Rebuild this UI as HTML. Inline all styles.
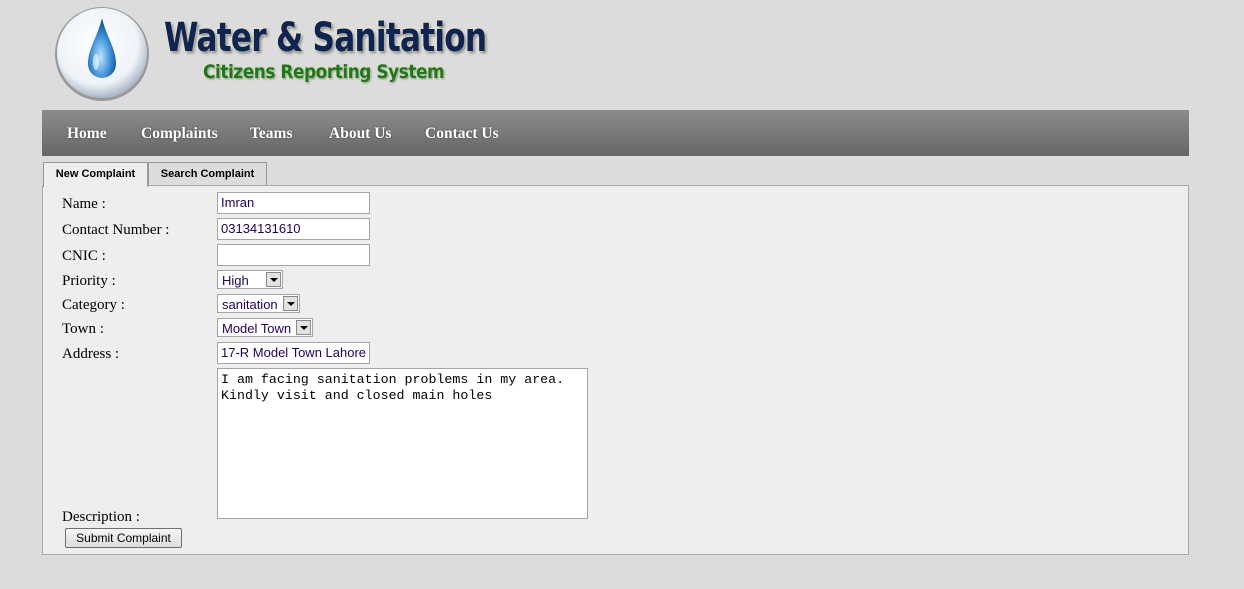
<!DOCTYPE html>
<html><head><style>
body{margin:0;width:1244px;height:589px;background:#dcdcdc;position:relative;overflow:hidden;font-family:"Liberation Serif",serif}
.a{position:absolute}
.nav{left:42px;top:110px;width:1147px;height:46px;background:linear-gradient(#8c8c8c,#666)}
.nav span{position:absolute;top:15px;color:#fff;font-weight:bold;font-size:15.5px;text-shadow:0 0 2px #444}
.tab{top:162px;height:22px;border:1px solid #999;border-bottom:none;font:bold 11px "Liberation Sans",sans-serif;line-height:23px;text-align:center;background:#dcdcdc}
.panel{left:42px;top:185px;width:1145px;height:368px;background:#eee;border:1px solid #aaa}
.l{left:62px;font-size:15px;color:#000}
.in{left:217px;width:148px;height:20px;background:#fff;border:1px solid #a5a5a5;font:13px "Liberation Sans",sans-serif;color:#200060;line-height:20px;padding-left:3px;box-sizing:content-box}
.sel{left:217px;height:19px;background:#fff;border:1px solid #a5a5a5;font:13px "Liberation Sans",sans-serif;color:#200060;line-height:19px;padding-left:4px;box-sizing:border-box}
.sel i{position:absolute;right:1px;top:1px;width:15px;height:15px;background:#e2e2e2;border:1px solid #888;box-sizing:border-box}
.sel i:after{content:"";position:absolute;left:3px;top:5px;border:4px solid transparent;border-top:4px solid #000;border-bottom:none}
</style></head><body>
<svg class="a" style="left:52px;top:4px" width="100" height="100">
<defs><radialGradient id="c" cx="45%" cy="40%" r="60%"><stop offset="0" stop-color="#fff"/><stop offset=".75" stop-color="#eef3f8"/><stop offset="1" stop-color="#a9b7c6"/></radialGradient>
<radialGradient id="d" cx="45%" cy="65%" r="60%"><stop offset="0" stop-color="#bfe4ff"/><stop offset=".6" stop-color="#3a8fd8"/><stop offset="1" stop-color="#0c4d9a"/></radialGradient></defs>
<circle cx="50" cy="50" r="47" fill="#555" opacity=".5"/>
<circle cx="50" cy="49" r="45" fill="url(#c)"/>
<path d="M50 14 C46 32 36 44 36 60 A14 14 0 0 0 64 60 C64 44 54 32 50 14Z" fill="url(#d)"/>
<ellipse cx="44" cy="58" rx="3" ry="8" fill="#fff" opacity=".6"/>
</svg>
<div class="a" style="left:164px;top:15px;font:bold 40px 'DejaVu Sans',sans-serif;letter-spacing:-1px;color:#0d2455;text-shadow:0 0 3px #f5f0b0,2px 2px 3px #777;transform:scaleX(0.78);transform-origin:left;white-space:nowrap">Water &amp; Sanitation</div>
<div class="a" style="left:203px;top:61px;font:bold 19px 'DejaVu Sans',sans-serif;letter-spacing:-0.5px;color:#187a18;text-shadow:0 0 2px #f5f0b0,1px 1px 2px #777;transform:scaleX(0.89);transform-origin:left;white-space:nowrap">Citizens Reporting System</div>
<div class="a nav"><span style="left:25px">Home</span><span style="left:99px">Complaints</span><span style="left:208px">Teams</span><span style="left:287px">About Us</span><span style="left:383px">Contact Us</span></div>
<div class="a panel"></div>
<div class="a tab" style="left:43px;width:103px;background:#eee;height:24px;z-index:2">New Complaint</div>
<div class="a tab" style="left:148px;width:117px">Search Complaint</div>
<div class="a l" style="top:196px">Name :</div>
<div class="a l" style="top:222px">Contact Number :</div>
<div class="a l" style="top:248px">CNIC :</div>
<div class="a l" style="top:273px">Priority :</div>
<div class="a l" style="top:297px">Category :</div>
<div class="a l" style="top:321px">Town :</div>
<div class="a l" style="top:346px">Address :</div>
<div class="a l" style="top:509px">Description :</div>
<div class="a in" style="top:192px">Imran</div>
<div class="a in" style="top:218px">03134131610</div>
<div class="a in" style="top:244px"></div>
<div class="a sel" style="top:270px;width:66px">High<i></i></div>
<div class="a sel" style="top:294px;width:83px">sanitation<i></i></div>
<div class="a sel" style="top:318px;width:96px">Model Town<i></i></div>
<div class="a in" style="top:342px">17-R Model Town Lahore</div>
<div class="a" style="left:217px;top:368px;width:363px;height:143px;background:#fff;border:1px solid #a5a5a5;font:13.3px 'Liberation Mono',monospace;padding:3px;line-height:16px;color:#000">I am facing sanitation problems in my area.<br>Kindly visit and closed main holes</div>
<div class="a" style="left:65px;top:528px;width:115px;height:18px;background:linear-gradient(#f6f6f6,#ddd);border:1px solid #707070;border-radius:2px;font:12px 'Liberation Sans',sans-serif;text-align:center;line-height:18px">Submit Complaint</div>
</body></html>
